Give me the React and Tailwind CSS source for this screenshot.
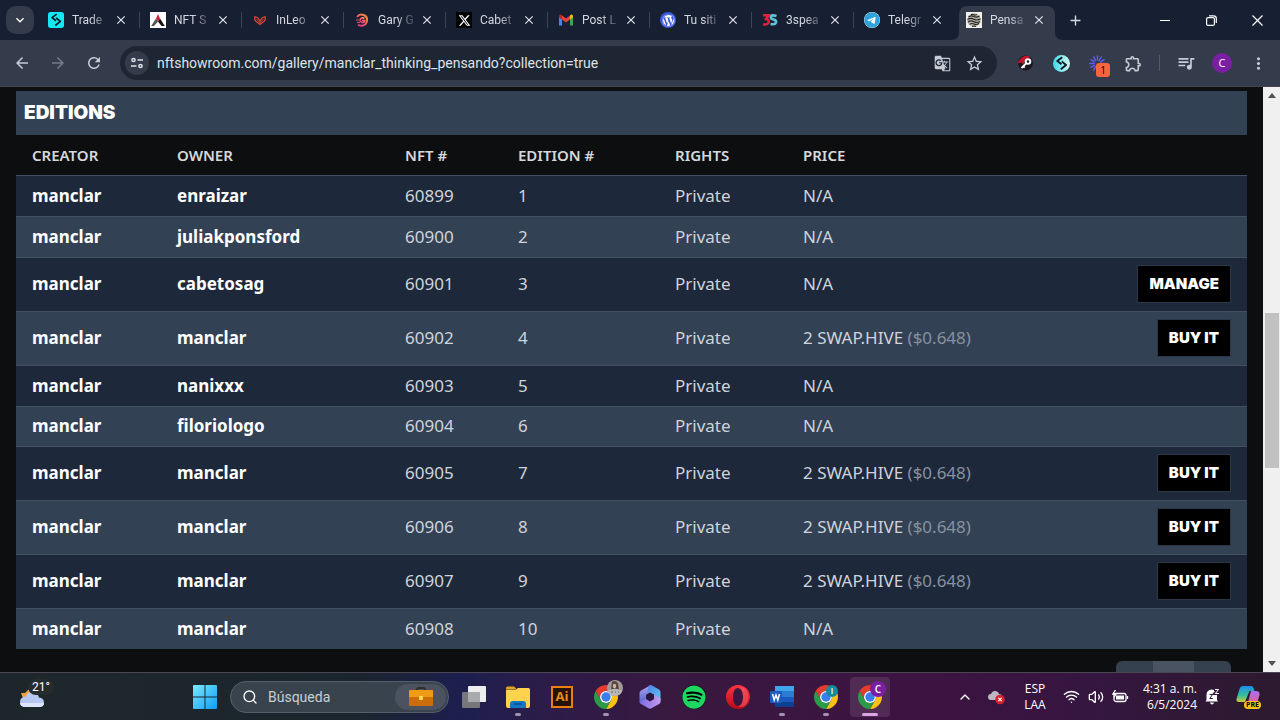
import { FaXTwitter, FaSpotify, FaWordpress, FaTelegram } from 'react-icons/fa6';
import { MdArrowBack, MdArrowForward, MdRefresh, MdGTranslate, MdStarBorder, MdOutlineExtension, MdQueueMusic, MdMoreVert, MdAdd, MdClose, MdKeyboardArrowDown } from 'react-icons/md';
import { Search, ChevronUp, Wifi, Volume2 } from 'lucide-react';

const editions = [
  { owner: 'enraizar', nft: 60899, price: null },
  { owner: 'juliakponsford', nft: 60900, price: null },
  { owner: 'cabetosag', nft: 60901, price: null, action: 'MANAGE' },
  { owner: 'manclar', nft: 60902, price: '2 SWAP.HIVE', usd: '($0.648)', action: 'BUY IT' },
  { owner: 'nanixxx', nft: 60903, price: null },
  { owner: 'filoriologo', nft: 60904, price: null },
  { owner: 'manclar', nft: 60905, price: '2 SWAP.HIVE', usd: '($0.648)', action: 'BUY IT' },
  { owner: 'manclar', nft: 60906, price: '2 SWAP.HIVE', usd: '($0.648)', action: 'BUY IT' },
  { owner: 'manclar', nft: 60907, price: '2 SWAP.HIVE', usd: '($0.648)', action: 'BUY IT' },
  { owner: 'manclar', nft: 60908, price: null }
];

const SwirlMark = () => (
  <g fill="none" stroke="#0b1a22" strokeWidth="2.600" strokeLinejoin="round">
    <path d="M13 3.200 6 8.500l6 4.600" />
    <path d="m12.300 9 6.200 5-7.500 6.200" />
  </g>
);

const TradeIcon = () => (
  <svg viewBox="0 0 24 24" className="w-4 h-4">
    <rect width="24" height="24" rx="4" fill="#14e8f4" />
    <SwirlMark />
  </svg>
);

const NftIcon = () => (
  <svg viewBox="0 0 16 16" className="w-4 h-4">
    <rect width="16" height="16" fill="#fff" />
    <path d="M8 2 10 6.500 8 9.500 6 6.500z" fill="#d3213d" />
    <path d="M6 6.500 8 9.500 4 14H1.200z" fill="#555" />
    <path d="M10 6.500 8 9.500 11.500 14h3.300z" fill="#111" />
  </svg>
);

const LeoIcon = () => (
  <svg viewBox="0 0 16 16" className="w-4 h-4" fill="none" stroke="#d8452f" strokeWidth="1.300">
    <path d="M8 12.500 3.600 9Q2 7 3 4.700L6 6l2 3 2-3 3-1.300Q14 7 12.400 9z" />
    <path d="M4.500 7 8 11l3.500-4" strokeWidth="0.900" />
  </svg>
);

const GaryIcon = () => (
  <svg viewBox="0 0 16 16" className="w-4 h-4" fill="none" strokeWidth="2">
    <defs>
      <linearGradient id="gary" x1="1" y1="0" x2="0" y2="1"><stop stopColor="#f79a3a" /><stop offset="1" stopColor="#e0258e" /></linearGradient>
    </defs>
    <path d="M3 5Q5.500 1.500 9.500 3q4 1.500 3.500 5.500-.5 4.800-5 5.200-2 .3-4-1" stroke="url(#gary)" />
    <path d="M10.500 6.500Q8 5 6.500 7T8 10.500q2.300.5 2.700-2H8" stroke="url(#gary)" strokeWidth="1.600" />
    <path d="M2 8h3M3 10.500h3" stroke="#ec4a6a" strokeWidth="1.200" />
  </svg>
);

const XIcon = () => (
  <span className="flex w-4 h-4 items-center justify-center bg-black text-white"><FaXTwitter size={13} /></span>
);

const GmailIcon = () => (
  <svg viewBox="0 0 16 16" className="w-4 h-4">
    <path d="M1 5v8.500h3V7z" fill="#4285f4" />
    <path d="M15 5v8.500h-3V7z" fill="#34a853" />
    <path d="M4 3.500v4L8 10.500l4-3v-4L8 6.500z" fill="#ea4335" />
    <path d="M1 4.200Q1.200 2 3.200 2.800L4 3.500v4L1 5.500z" fill="#c5221f" />
    <path d="M15 4.200Q14.800 2 12.800 2.800L12 3.500v4l3-2z" fill="#fbbc04" />
  </svg>
);

const WordpressIcon = () => (
  <span className="flex w-4 h-4 items-center justify-center rounded-full bg-[#3858d9] text-white"><FaWordpress size={13} /></span>
);

const SpeakIcon = () => (
  <svg viewBox="0 0 16 16" className="w-4 h-4" fill="none" strokeWidth="2.600">
    <path d="M1 3.300h5.500L4 7q3.500.5 2.500 3.800Q5.300 13.300 1 12.200" stroke="#e0203c" />
    <path d="M14.500 4Q9.500 2.300 8.800 5q0 2 2.700 2.600 3 .8 2.500 3-1 2.500-5.500 1.300" stroke="#5cc3d8" />
  </svg>
);

const TelegramIcon = () => (
  <span className="flex w-4 h-4 items-center justify-center rounded-full bg-white text-[#2fa3dc]"><FaTelegram size={16} /></span>
);

const PensandoIcon = () => (
  <svg viewBox="0 0 16 16" className="w-4 h-4" fill="none" stroke="#222" strokeWidth="1.100">
    <rect width="16" height="16" fill="#f4f1ea" stroke="none" />
    <circle cx="8" cy="8" r="6.800" fill="#b9b5aa" stroke="none" />
    <path d="M2.500 5q3-2 5.500-.5t5.500-.5M1.500 7.500q3.500-2 6.500-.3t6.500-.4M2 10q3-2 6-.3t6-.2M3.500 12.400q2.500-1.700 4.500-.4t5-.4M5 2.700q2-1 3 0t3-.3M6 14.500q2-1 4 0" />
  </svg>
);

const tabs = [
  { title: 'Trade', Icon: TradeIcon },
  { title: 'NFT S', Icon: NftIcon },
  { title: 'InLeo', Icon: LeoIcon },
  { title: 'Gary G', Icon: GaryIcon },
  { title: 'Cabet', Icon: XIcon },
  { title: 'Post L', Icon: GmailIcon },
  { title: 'Tu siti', Icon: WordpressIcon },
  { title: '3spea', Icon: SpeakIcon },
  { title: 'Telegr', Icon: TelegramIcon },
  { title: 'Pensa', Icon: PensandoIcon, active: true }
];

function Tab({ title, Icon, active, last }) {
  return (
    <div className="relative flex h-10 w-[102px] shrink-0 items-center pl-[10px]">
      {active && (
        <svg className="absolute -left-[5px] top-1.5 h-[34px] w-[112px]" viewBox="0 0 112 34" fill="#343b4b">
          <path d="M0 34q8 0 8-8V9q0-9 9-9h78q9 0 9 9v17q0 8 8 8z" />
        </svg>
      )}
      <span className="relative"><Icon /></span>
      <span className="relative ml-2 w-[38px] whitespace-nowrap font-[Roboto,sans-serif] text-xs text-[#d3d7df] [mask-image:linear-gradient(to_right,black_50%,rgb(0_0_0/0.3)_85%)]">{title}</span>
      <button aria-label={`Close ${title}`} className="relative ml-[3px] flex h-4 w-4 items-center justify-center text-[#e3e6ec]"><MdClose size={14} /></button>
      {!active && !last && <span className="absolute right-0 h-4 w-px bg-[#3b4354]" />}
    </div>
  );
}

function TabStrip() {
  return (
    <header className="flex h-10 shrink-0 items-center bg-[#172032]">
      <button aria-label="Search tabs" className="ml-1.5 mr-1 flex h-7 w-7 shrink-0 items-center justify-center rounded-[10px] bg-[#343b4b] text-white"><MdKeyboardArrowDown size={16} /></button>
      <nav className="flex">
        {tabs.map((t, i) => <Tab key={t.title} {...t} last={i === 8} />)}
      </nav>
      <button aria-label="New tab" className="flex h-7 w-[34px] items-center justify-center text-[#d3d7df]"><MdAdd size={17} /></button>
      <div className="ml-auto flex text-white">
        <button aria-label="Minimize" className="flex h-10 w-[46px] items-center justify-center"><span className="h-px w-2.5 bg-white" /></button>
        <button aria-label="Restore" className="flex h-10 w-[46px] items-center justify-center">
          <svg width="11" height="11" viewBox="0 0 11 11" fill="none" stroke="currentColor" strokeWidth="1.200">
            <rect x="0.600" y="2.600" width="7.800" height="7.800" rx="1.500" />
            <path d="M3 .8h4.500Q10.300.8 10.300 3.500V8" />
          </svg>
        </button>
        <button aria-label="Close window" className="flex h-10 w-[46px] items-center justify-center">
          <svg width="11" height="11" viewBox="0 0 11 11" stroke="currentColor" strokeWidth="1.200"><path d="m.5.5 10 10m0-10-10 10" /></svg>
        </button>
      </div>
    </header>
  );
}

function Toolbar() {
  const cell = 'flex h-9 w-9 shrink-0 items-center justify-center';
  return (
    <div className="flex h-[47px] shrink-0 items-center border-b border-[#45484d] bg-[#343b4b] px-1 text-[#c7cbd6]">
      <button aria-label="Back" className={cell}><MdArrowBack size={18} /></button>
      <button aria-label="Forward" className={`${cell} text-[#747b8a]`}><MdArrowForward size={18} /></button>
      <button aria-label="Reload" className={cell}><MdRefresh size={18} /></button>
      <div className="ml-2 mr-[10px] flex h-[34px] flex-1 items-center rounded-full bg-[#1e2634] pl-[5px] pr-[11px]">
        <button aria-label="Site settings" className="flex h-6 w-6 items-center justify-center rounded-full bg-[#343b4b] text-[#dfe3ea]">
          <svg width="14" height="14" viewBox="0 0 14 14" fill="none" stroke="currentColor" strokeWidth="1.500">
            <circle cx="3.500" cy="4" r="1.600" /><path d="M7.500 4h5.500M1 10h5.500" /><circle cx="10.500" cy="10" r="1.600" />
          </svg>
        </button>
        <input aria-label="Address" type="text" defaultValue="nftshowroom.com/gallery/manclar_thinking_pensando?collection=true" className="ml-2 min-w-0 flex-1 bg-transparent font-[Roboto,sans-serif] text-sm text-[#dfe2e8] outline-none" />
        <button aria-label="Translate" className="flex w-10 justify-center"><MdGTranslate size={17} /></button>
        <button aria-label="Bookmark" className="flex w-6 justify-center"><MdStarBorder size={19} /></button>
      </div>
      <button aria-label="Keychain" className={cell}>
        <svg width="18" height="18" viewBox="0 0 18 18">
          <circle cx="9.500" cy="9" r="7.500" fill="#1a1520" />
          <path d="M1 9.500 5 4q5-4 9-1L9 7.500 7 10.500 5.500 8.500z" fill="#c4162e" />
          <circle cx="12" cy="7.500" r="2.300" fill="none" stroke="#fff" strokeWidth="2" />
          <path d="m10.500 9-5 5m1.200-2.300 2 2" stroke="#fff" strokeWidth="1.800" />
        </svg>
      </button>
      <button aria-label="Wallet" className={cell}>
        <svg width="17" height="17" viewBox="0 0 24 24">
          <defs><linearGradient id="wallet" x2="1"><stop stopColor="#35dced" /><stop offset="1" stopColor="#d6f7ef" /></linearGradient></defs>
          <circle cx="12" cy="12" r="12" fill="url(#wallet)" />
          <SwirlMark />
        </svg>
      </button>
      <button aria-label="Loom, 1 notification" className={`${cell} relative`}>
        <svg width="17" height="17" viewBox="0 0 16 16" stroke="#625df5" strokeWidth="1.300" strokeLinecap="round">
          {[...Array(12)].map((_, i) => <path key={i} d="M8 .8v4" transform={`rotate(${i * 30} 8 8)`} />)}
        </svg>
        <span className="absolute bottom-1 right-[5px] flex h-3.5 w-3.5 items-center justify-center rounded-[3px] bg-[#f9643f] text-[10px] text-black">1</span>
      </button>
      <button aria-label="Extensions" className={cell}><MdOutlineExtension size={19} /></button>
      <div className="flex w-[17px] justify-center"><span className="h-4 w-px bg-[#525a6b]" /></div>
      <button aria-label="Media" className={cell}><MdQueueMusic size={20} /></button>
      <button aria-label="Profile" className={cell}><span className="flex h-5 w-5 items-center justify-center rounded-full bg-[#7b1fa2] text-[11px] text-white">C</span></button>
      <button aria-label="Menu" className={cell}><MdMoreVert size={19} /></button>
    </div>
  );
}

function EditionsTable() {
  return (
    <table className="w-full table-fixed text-left font-['Noto_Sans',sans-serif] text-[17px] leading-6 text-[#cfd4dc]">
      <thead>
        <tr className="h-10 text-[15px] text-[#d6d8dc]">
          <th className="w-[145px] px-4 font-semibold">CREATOR</th>
          <th className="w-[228px] px-4 font-semibold">OWNER</th>
          <th className="w-[113px] px-4 font-semibold">NFT #</th>
          <th className="w-[157px] px-4 font-semibold">EDITION #</th>
          <th className="w-[128px] px-4 font-semibold">RIGHTS</th>
          <th className="px-4 font-semibold">PRICE</th>
          <th aria-label="Action" className="w-[140px] px-4" />
        </tr>
      </thead>
      <tbody>
        {editions.map((e, i) => (
          <tr key={e.nft} className={`border-t border-[#435062] ${e.action ? 'h-[54px]' : i === 5 ? 'h-10' : 'h-[41px]'} ${i % 2 ? 'bg-[#334155]' : 'bg-[#1e283b]'}`}>
            <td className="px-4"><a href="#manclar" className="font-bold text-white">manclar</a></td>
            <td className="px-4"><a href={`#${e.owner}`} className="font-bold text-white">{e.owner}</a></td>
            <td className="px-4">{e.nft}</td>
            <td className="px-4">{i + 1}</td>
            <td className="px-4">Private</td>
            <td className="px-4">{e.price || 'N/A'} {e.usd && <span className="text-[#8791a0]">{e.usd}</span>}</td>
            <td className="px-4 text-right">
              {e.action && <button className="h-[38px] border border-[#2b3747] bg-black px-[11px] align-middle font-[Inter,sans-serif] text-[15px] font-black text-white">{e.action}</button>}
            </td>
          </tr>
        ))}
      </tbody>
    </table>
  );
}

function Scrollbar() {
  return (
    <div className="flex w-[17px] shrink-0 flex-col items-center bg-[#f0f0f0]">
      <svg className="my-1.5" width="8" height="5" viewBox="0 0 8 5" fill="#505050"><path d="M0 5h8L4 0z" /></svg>
      <div className="flex w-full flex-1 flex-col items-center">
        <div className="h-[38%]" />
        <div className="h-[28%] w-3.5 bg-[#c1c1c1]" />
      </div>
      <svg className="my-1.5" width="8" height="5" viewBox="0 0 8 5" fill="#505050"><path d="M0 0h8L4 5z" /></svg>
    </div>
  );
}

const ChromeIcon = () => (
  <svg viewBox="0 0 24 24" className="h-6 w-6">
    <path d="M1.610 6A12 12 0 0 1 22.390 6H12a6 6 0 0 0-5.200 9z" fill="#e33b2e" />
    <path d="M22.390 6A12 12 0 0 1 12 24l5.200-9A6 6 0 0 0 12 6z" fill="#fbc116" />
    <path d="M12 24A12 12 0 0 1 1.610 6l5.190 9a6 6 0 0 0 10.400 0z" fill="#2a9c48" />
    <circle cx="12" cy="12" r="6" fill="#fff" /><circle cx="12" cy="12" r="4.700" fill="#3b7ded" />
  </svg>
);

const TaskViewIcon = () => (
  <svg viewBox="0 0 24 24" className="h-6 w-6">
    <rect x="6" y="1" width="18" height="16" rx="1" fill="#eeeeef" />
    <path d="M0 8q0-1 1-1h17v15q0 1-1 1H1q-1 0-1-1z" fill="#77777b" />
    <path d="M6 7h12v10H6z" fill="#a9aaac" />
  </svg>
);

const ExplorerIcon = () => (
  <svg viewBox="0 0 24 24" className="h-6 w-6">
    <path d="M0 3q0-1.500 1.500-1.500H8L10.500 4H0z" fill="#e8a416" />
    <path d="M0 4.500h10L12 3h10.500Q24 3 24 4.500V21q0 2-2 2H2q-2 0-2-2z" fill="#fdd24c" />
    <path d="M4 23v-4q0-3 3-3h10q3 0 3 3v4z" fill="#1476c6" />
    <path d="M8 19h8" stroke="#0a4f96" strokeWidth="1.500" />
  </svg>
);

const AiIcon = () => (
  <span className="flex h-[22px] w-[22px] items-center justify-center border-2 border-[#e87f10] bg-[#271208] text-[13px] font-bold leading-none text-[#f08a12]">Ai</span>
);

const M365Icon = () => (
  <svg viewBox="0 0 24 24" className="h-6 w-6">
    <defs>
      <linearGradient id="ma" x2="0" y2="1"><stop stopColor="#b9a0ee" /><stop offset="1" stopColor="#4c62c9" /></linearGradient>
      <linearGradient id="mb" x2="1" y2="1"><stop stopColor="#4c7fe6" /><stop offset="1" stopColor="#64c6f4" /></linearGradient>
      <linearGradient id="mc" x2="1"><stop stopColor="#7a6be0" /><stop offset="1" stopColor="#c39bf0" /></linearGradient>
    </defs>
    <path d="M13 0 3 5.500Q1.500 6.500 1.500 8v9l6.500 2V10l7-4z" fill="url(#ma)" />
    <path d="M11 .5q1.500-.8 3 0l7 4Q22.500 5.500 22.500 7v9L16 14V9.500L9 7z" fill="url(#mb)" />
    <path d="M1.500 17 8 14l4 2.500 4-2.500V9.500l6.500 4V17q0 1-1.500 2l-7.500 4.300q-1.500.8-3 0L3 19q-1.500-.8-1.500-2z" fill="url(#mc)" />
    <path d="M8.500 9.500 12 7.500l3.500 2v4.500L12 16l-3.500-2z" fill="#2a1740" />
  </svg>
);

const SpotifyIcon = () => (
  <span className="flex rounded-full bg-black text-[#1ed760]"><FaSpotify size={24} /></span>
);

const OperaIcon = () => (
  <svg viewBox="0 0 24 24" className="h-6 w-6">
    <defs><linearGradient id="op" y2="1" x2="0"><stop stopColor="#ff3340" /><stop offset="1" stopColor="#b90b18" /></linearGradient></defs>
    <path fillRule="evenodd" d="M12 0a12 12 0 1 0 0 24 12 12 0 1 0 0-24zm0 3c3.300 0 5 4.300 5 9s-1.700 9-5 9-5-4.300-5-9 1.700-9 5-9z" fill="url(#op)" />
    <path d="M12 3q3-2 6.500 0Q22.500 6.500 22.500 12T18.500 21q-3.500 2-6.500 0c3.300 0 5-4.300 5-9s-1.700-9-5-9z" fill="#f5606a" opacity=".55" />
  </svg>
);

const WordIcon = () => (
  <svg viewBox="0 0 24 24" className="h-6 w-6">
    <rect x="5" y="1" width="19" height="6" fill="#41a5ee" /><rect x="5" y="6" width="19" height="6" fill="#2b7cd3" />
    <rect x="5" y="12" width="19" height="5" fill="#185abd" /><rect x="5" y="17" width="19" height="5" fill="#103f91" />
    <rect y="6" width="12" height="12" rx="1" fill="#1a5dbe" />
    <path d="m2.500 9 1.700 6L6 10l1.800 5 1.700-6" fill="none" stroke="#fff" strokeWidth="1.500" />
  </svg>
);

const apps = [
  { name: 'Task view', Icon: TaskViewIcon },
  { name: 'Explorer', Icon: ExplorerIcon, open: true },
  { name: 'Illustrator', Icon: AiIcon },
  { name: 'Chrome', Icon: ChromeIcon, open: true, photo: true },
  { name: 'Microsoft 365', Icon: M365Icon },
  { name: 'Spotify', Icon: SpotifyIcon },
  { name: 'Opera', Icon: OperaIcon },
  { name: 'Word', Icon: WordIcon, open: true },
  { name: 'Chrome I', Icon: ChromeIcon, open: true, badge: 'I', badgeColor: 'bg-[#128c9b] h-3 w-3 top-0 right-0 text-[8px]' },
  { name: 'Chrome C', Icon: ChromeIcon, active: true, badge: 'C', badgeColor: 'bg-[#7b1fa2] h-4 w-4 -top-1 -right-1 text-[10px]' }
];

function AppButton({ name, Icon, open, active, photo, badge, badgeColor }) {
  return (
    <button aria-label={name} className={`relative mx-0.5 flex h-10 w-10 items-center justify-center rounded ${active ? 'bg-white/10' : ''}`}>
      <span className="relative">
        <Icon />
        {photo && (
          <svg className="absolute -right-[5px] -top-[5px]" width="16" height="16" viewBox="0 0 16 16">
            <circle cx="8" cy="8" r="8" fill="#a39b98" />
            <path d="M5 1.500q4-1.500 6 2l1 6-4-1-4 1z" fill="#5a4640" />
            <ellipse cx="7.500" cy="6" rx="1.700" ry="2.300" fill="#cfb3a3" />
            <path d="M.8 10.500q7-3 14.400 0-1.500 5-7.200 5.500-5.700-.5-7.200-5.500z" fill="#b9b7ba" />
            <path d="M4 12h2m2 0h1m2 0h1" stroke="#6b6670" />
          </svg>
        )}
        {badge && <span className={`absolute flex items-center justify-center rounded-full font-semibold leading-none text-white ${badgeColor}`}>{badge}</span>}
      </span>
      {open && <span className="absolute bottom-px h-[3px] w-1.5 rounded-full bg-[#a294ad]" />}
      {active && <span className="absolute bottom-px h-[3px] w-4 rounded-full bg-[#dba3e6]" />}
    </button>
  );
}

function Taskbar() {
  return (
    <footer className="flex h-12 shrink-0 items-center border-t border-[#4c4754] bg-[linear-gradient(to_right,#1d272b_0%,#1b252d_28%,#1c1f4e_36%,#2b1c49_42%,#381940_52%,#3d1341_72%,#351640_85%,#2c1a2e_100%)] text-white">
      <button aria-label="Weather" className="flex w-[183px] shrink-0 items-center pl-5">
        <span className="relative flex h-10 w-8 items-center">
          <svg width="26" height="26" viewBox="0 0 26 26">
            <path d="M1 9h4l4-4 2 7-7 5z" fill="#f0a13a" />
            <path d="M6 23q-6 0-6-5t6-5.500Q8 7 13 8t6 5.500q5 .5 5 5T19 23z" fill="#b6c8f2" />
            <path d="M6 23q-6 0-6-4h24q0 4-5 4z" fill="#dbe5fb" />
          </svg>
          <span className="absolute -right-0.5 top-0.5 rounded-full bg-[#262b2e] px-1 font-[Roboto,sans-serif] text-xs leading-4">21°</span>
        </span>
      </button>
      <button aria-label="Start" className="flex h-10 w-11 shrink-0 items-center justify-center">
        <svg width="24" height="24" viewBox="0 0 24 24">
          <defs><linearGradient id="win" x2="1" y2="1"><stop stopColor="#7be8fd" /><stop offset="1" stopColor="#0f9cf5" /></linearGradient></defs>
          <path d="M1 0h10.500v11.500H0V1q0-1 1-1zM12.500 0H23q1 0 1 1v10.500H12.500zM0 12.500h11.500V24H1q-1 0-1-1zM12.500 12.500H24V23q0 1-1 1H12.500z" fill="url(#win)" />
        </svg>
      </button>
      <div className="mx-[3px] flex h-8 w-[219px] shrink-0 items-center rounded-full border border-[#55606c] bg-[#38434e] pl-[11px] pr-0.5">
        <Search size={16} />
        <input aria-label="Búsqueda" type="text" placeholder="Búsqueda" className="ml-2.5 min-w-0 flex-1 bg-transparent font-[Roboto,sans-serif] text-sm outline-none placeholder:text-[#c9ced4]" />
        <span className="flex h-[26px] w-[51px] items-center justify-center rounded-full bg-[#4d5261]">
          <svg width="24" height="20" viewBox="0 0 24 20">
            <path d="M8 3q0-2 2-2h4q2 0 2 2" fill="none" stroke="#332c29" strokeWidth="2" />
            <rect y="3" width="24" height="16" rx="1" fill="#c96e0b" /><path d="M0 4q0-1 1-1h22q1 0 1 1v6H0z" fill="#ef9b16" />
            <rect x="10" y="9" width="4" height="4" rx="1" fill="#ffd94a" />
          </svg>
        </span>
      </div>
      {apps.map(a => <AppButton key={a.name} {...a} />)}
      <div className="ml-auto flex shrink-0 items-center pr-5 text-xs">
        <button aria-label="Hidden icons" className="w-8"><ChevronUp size={16} className="mx-auto" /></button>
        <button aria-label="OneDrive" className="w-8">
          <svg className="mx-auto" width="18" height="16" viewBox="0 0 18 16">
            <path d="M3 11q-3 0-3-3t3-3q1-3 4-3t4 3q3 0 3 3t-3 3z" fill="#bdb7c3" />
            <circle cx="12" cy="10.500" r="4.800" fill="#d9222f" /><path d="m10.300 8.800 3.400 3.400m0-3.400-3.400 3.400" stroke="#fff" strokeWidth="1.200" />
          </svg>
        </button>
        <button className="w-11 leading-4">ESP<br />LAA</button>
        <button aria-label="Network and sound" className="ml-1.5 flex items-center gap-2">
          <Wifi size={17} /><Volume2 size={16} />
          <svg width="17" height="14" viewBox="0 0 17 14" fill="none" stroke="currentColor" strokeWidth="1.300">
            <rect x="2" y="3.500" width="12" height="8" rx="2" /><path d="M15.500 6v3" /><rect x="4" y="5.500" width="8" height="4" fill="currentColor" stroke="none" />
            <path d="M3.500 0 1 4h3L2 7.500" />
          </svg>
        </button>
        <button className="w-[68px] text-right leading-4">4:31 a. m.<br />6/5/2024</button>
        <button aria-label="Notifications" className="ml-2">
          <svg width="15" height="17" viewBox="0 0 15 17" fill="none">
            <path d="M1.500 12V7q0-5 5-5.500 5.500.5 5.500 5.500v5l1 1.500H.5zM5 14.500h4Q8.500 16.500 7 16.500T5 14.500z" fill="#fff" />
            <path d="M4.500 6.500h3L4.800 10.500h3" stroke="#35183f" />
            <path d="M9 1.500h4L9.800 5.500h4" stroke="#35183f" strokeWidth="3" /><path d="M10 1.500h3.500L10.300 5.500H14" stroke="#fff" />
          </svg>
        </button>
        <button aria-label="Copilot" className="relative ml-4 h-6 w-6">
          <svg width="24" height="24" viewBox="0 0 24 24">
            <defs>
              <linearGradient id="ca" x2="0" y2="1"><stop stopColor="#1b8fe8" /><stop offset=".6" stopColor="#36c09a" /><stop offset="1" stopColor="#d3c83a" /></linearGradient>
              <linearGradient id="cb" x2="0" y2="1"><stop stopColor="#a86ef0" /><stop offset="1" stopColor="#f0607a" /></linearGradient>
            </defs>
            <path d="M7 1h8q2 0 2.500 2l1 3h-5L9 17H3q-3 0-2.500-3L3.500 4Q4.500 1 7 1z" fill="url(#ca)" />
            <path d="M15 6h5q4 0 3.500 4l-2 7q-1 4-5 4H9q2 0 3-4z" fill="url(#cb)" />
          </svg>
          <span className="absolute -right-px bottom-0 rounded-sm bg-[#fbc21c] px-0.5 text-[7px] font-bold leading-2 text-black">PRE</span>
        </button>
      </div>
    </footer>
  );
}

export default function App() {
  return (
    <div className="flex h-screen flex-col overflow-hidden bg-[#0d0e10] font-['Open_Sans','Noto_Sans',sans-serif]">
      <TabStrip />
      <Toolbar />
      <div className="flex min-h-0 flex-1">
        <main className="min-w-0 flex-1 overflow-hidden px-4 pt-1">
          <h2 className="flex h-11 items-center bg-[#334155] px-2 font-[Inter,sans-serif] text-[19px] font-black text-white">EDITIONS</h2>
          <EditionsTable />
          <div className="mr-4 mt-3 flex justify-end">
            <button aria-label="Previous page" className="h-9 w-[37px] rounded-l-md bg-[#35414f]" />
            <button aria-label="Current page" className="h-9 w-[41px] bg-[#4a5361]" />
            <button aria-label="Next page" className="h-9 w-[37px] rounded-r-md bg-[#35414f]" />
          </div>
        </main>
        <Scrollbar />
      </div>
      <Taskbar />
    </div>
  );
}
